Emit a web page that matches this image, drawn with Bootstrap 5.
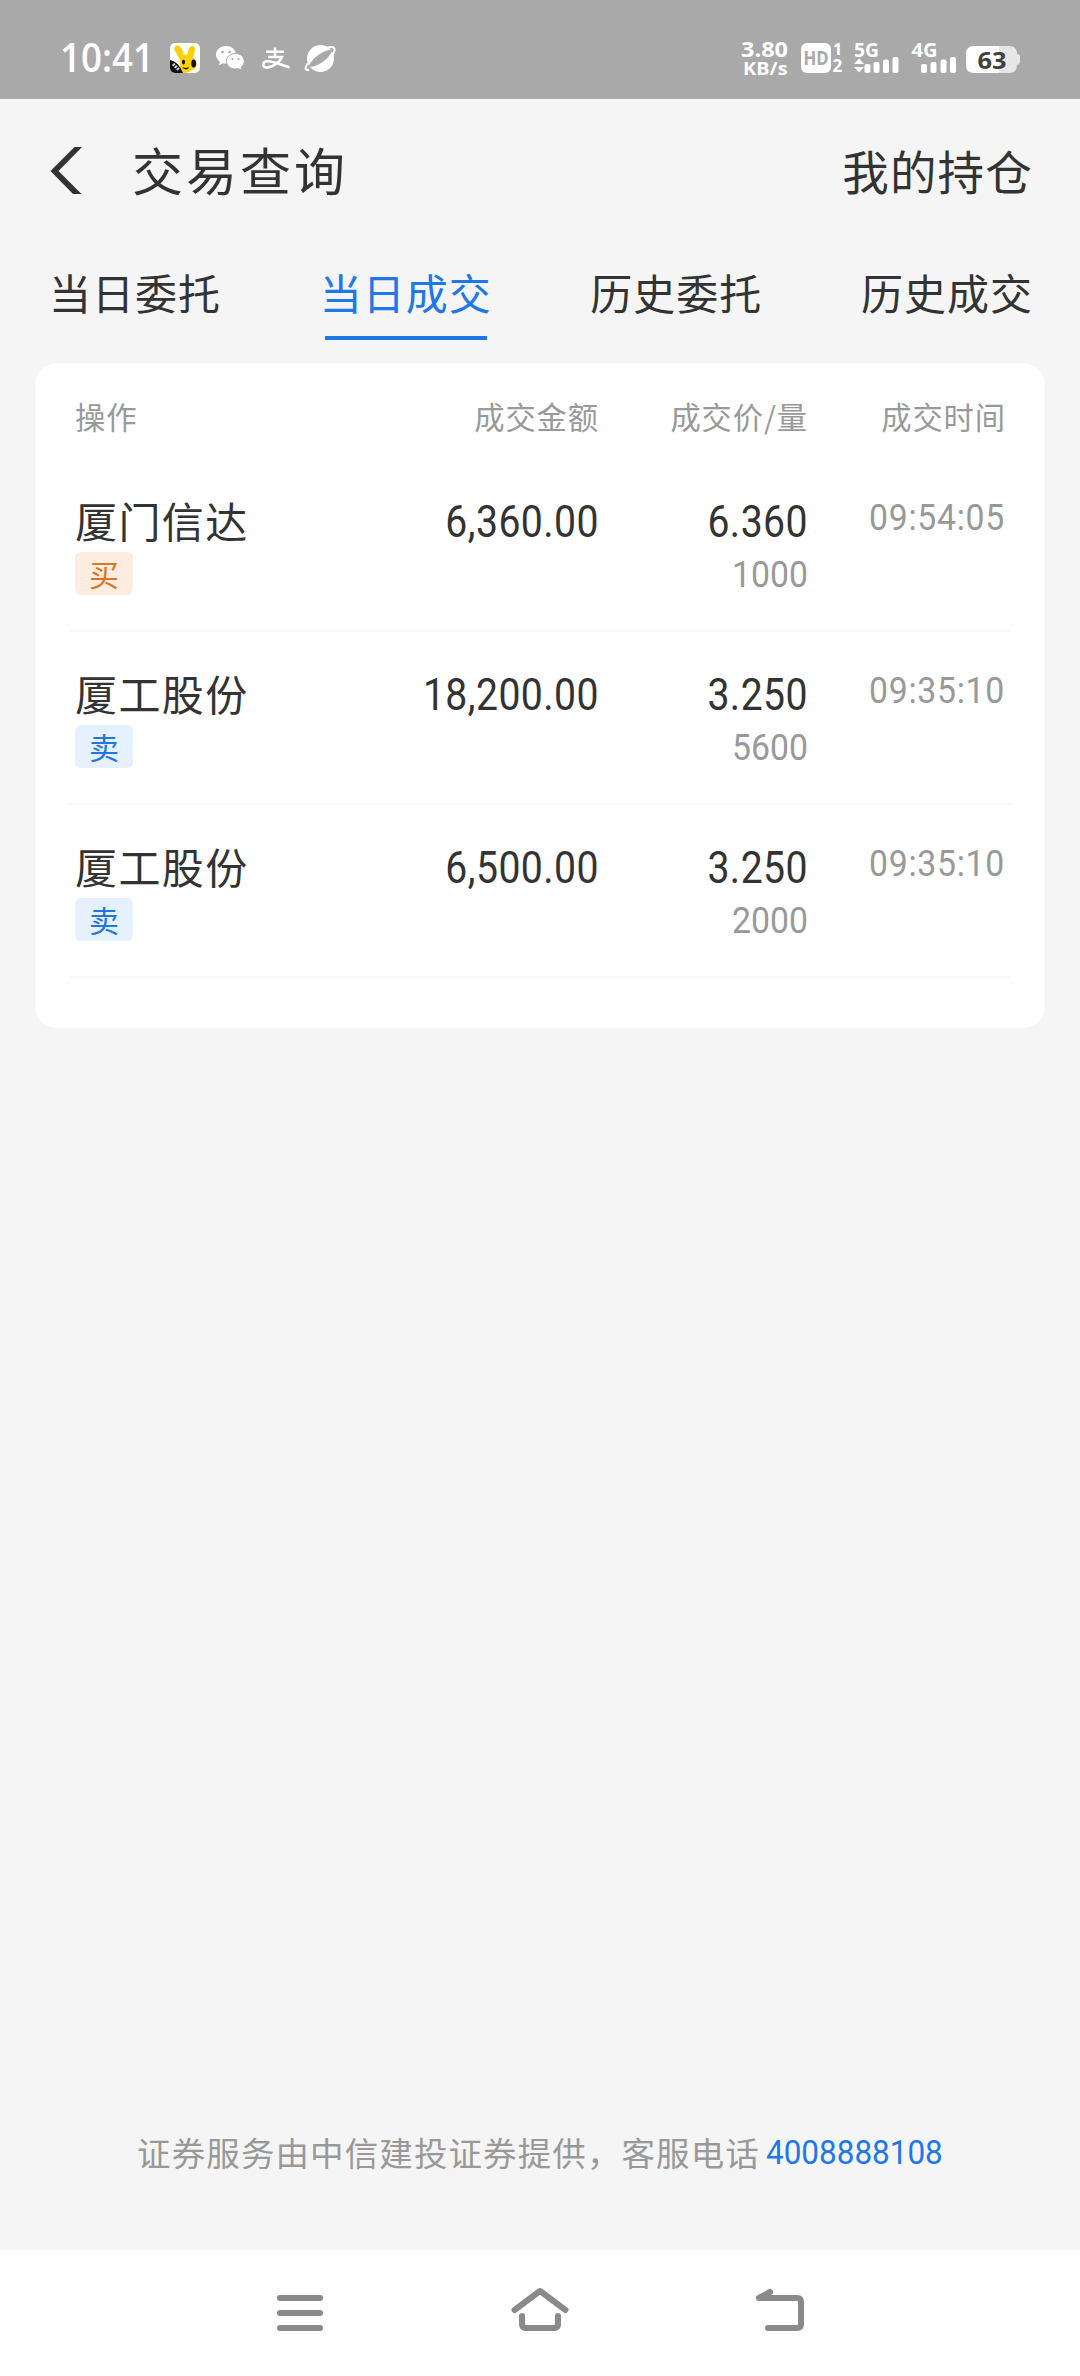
<!DOCTYPE html>
<html lang="zh-CN">
<head>
<meta charset="utf-8">
<meta name="viewport" content="width=device-width, initial-scale=1">
<title>交易查询</title>
<link rel="stylesheet" href="https://cdn.jsdelivr.net/npm/bootstrap@5.3.0/dist/css/bootstrap.min.css">
<script src="https://cdn.jsdelivr.net/npm/bootstrap@5.3.0/dist/js/bootstrap.bundle.min.js"></script>
<style>
  body { width: 1080px; height: 2376px; background: #f5f5f5; color: #333; overflow: hidden;
    font-family: "Noto Sans CJK SC", sans-serif; }
  svg { display: block; flex: none; }
  svg text { font-family: "Open Sans", sans-serif; }
  .status-bar { height: 99px; background: #a9a9a9; padding: 0 58px 0 60px; }
  .title-bar { height: 146px; padding: 0 47px 3px 50px; }
  .page-title { font-size: 51px; letter-spacing: 3px; line-height: 60px; margin: -4px 0 0 48px; }
  .holdings { font-size: 46.5px; letter-spacing: 1.2px; line-height: 60px; margin-top: -1px; }
  .tabs { height: 118px; padding: 0 47px 0 49px; }
  .tabs a { height: 95px; padding-top: 17px; font-size: 42px; letter-spacing: 1px; line-height: 60px; color: #333; }
  .tabs a.active { color: #2077e8; }
  .tabs a.active::after { content: ""; display: block; width: 162px; height: 4px; margin: 14px 0 0 5px; background: #2077e8; }
  .deals { margin: 0 35px; height: 665px; border: 0; border-radius: 22px; padding: 0 34px; }
  .deal-head { height: 96px; padding: 33px 5px 0 6px; font-size: 30.3px; letter-spacing: .9px; line-height: 40px; color: #999; }
  .deal { height: 173px; padding: 33px 6px 0; border-bottom: 2px solid #f8f8f8; }
  .c-name { width: 224px; } .c-sum { width: 300px; } .c-price { width: 209px; } .c-time { width: 197px; }
  .stock { font-size: 42px; letter-spacing: 1.4px; line-height: 56px; }
  .side { width: 58px; height: 43px; margin-top: 4px; border-radius: 6px; font-size: 30px; line-height: 43px; }
  .buy { background: #fdece0; color: #dc7420; }
  .sell { background: #e6f1ff; color: #2277dd; }
  .num { font-family: Roboto, sans-serif; transform: scaleX(.9); transform-origin: right center; }
  .num-lg { font-size: 43.5px; letter-spacing: .5px; line-height: 56px; margin-top: 3px; }
  .num-sm { font-size: 37.5px; line-height: 44px; color: #999; }
  .c-price .num-sm { margin-top: 1px; }
  .c-time { letter-spacing: .8px; margin-top: 3px; }
  .provider { height: 70px; font-size: 33.5px; letter-spacing: 1.1px; line-height: 50px; color: #999; margin-bottom: 53px; }
  .provider a { font-family: Roboto, sans-serif; font-size: 34px; letter-spacing: 0; color: #2077e8; transform: scaleX(.925); transform-origin: left center; margin-left: 6px; width: 177px; }
  .nav-keys { height: 126px; }
</style>
</head>
<body class="d-flex flex-column">

<header class="status-bar d-flex align-items-center">
  <svg width="280" height="99" viewBox="60 0 280 99">
    <text x="60" y="72" font-size="39.5" font-weight="600" fill="#fff" textLength="94" lengthAdjust="spacingAndGlyphs">10:41</text>
    <!-- rabbit app -->
    <clipPath id="app"><rect x="170" y="43" width="30" height="30" rx="5"/></clipPath>
    <g clip-path="url(#app)">
      <rect x="170" y="43" width="30" height="30" fill="#fff"/>
      <path d="M180 60 174.500 50Q173 45.500 178 45.500Q182 46 183.500 55L187 55Q188.500 45.500 193 46Q197 47 193 57L197 64Q196 70 186 73H180Z" fill="#ffd100"/>
      <path d="M170 60Q178 61 183 73H170Z" fill="#111"/>
      <path d="M173 64l6 6" stroke="#ddd" stroke-width="3" stroke-dasharray="2 1"/>
      <ellipse cx="183.500" cy="62" rx="1.500" ry="2.600" fill="#111"/><ellipse cx="193.700" cy="63.500" rx="2.400" ry="4" fill="#111"/>
      <path d="M183 67.500q3 2.500 5.500 0" fill="none" stroke="#111" stroke-width="1.200"/>
    </g>
    <!-- chat bubbles -->
    <g fill="#fff">
      <path d="M226 46c-6 0-10 4-10 8.700 0 3 1.600 5.500 4 7l-1.200 3.500 4.200-2c1 .3 2 .4 3 .4 6 0 10-4 10-8.800S232 46 226 46Z"/>
      <path d="M235.500 53.500c-5.200 0-9 3.400-9 7.700s3.800 7.800 9 7.800c1 0 2-.1 2.900-.4l3.500 2-.9-3.200c2-1.400 3.300-3.600 3.300-6.200 0-4.300-3.800-7.700-8.800-7.700Z" stroke="#a9a9a9" stroke-width="1"/>
    </g>
    <g fill="#a9a9a9"><circle cx="222.500" cy="52" r="1.300"/><circle cx="229.500" cy="52" r="1.300"/><circle cx="232.500" cy="59" r="1.100"/><circle cx="238.500" cy="59" r="1.100"/></g>
    <!-- payment logo -->
    <path d="M266 51.700h18M275 47.500v9M268 57h14C280 62 272 68 266.500 67.500C262 67 262 61.500 267.500 61.300C274 61.200 280 64.500 289.500 67.500" fill="none" stroke="#fff" stroke-width="2.500"/>
    <!-- ringed planet -->
    <circle cx="320.500" cy="58.500" r="13.500" fill="#fff"/>
    <path d="M309 66.500C312 59 322 51 332 50C329 58.500 318 66.500 309 66.500Z" fill="#a9a9a9" stroke="#a9a9a9"/>
    <path d="M308 63C304 69 305.500 71 309 69.500M326 48.200C334 45.500 337 47.500 332.500 55" fill="none" stroke="#fff" stroke-width="2"/>
  </svg>
  <svg class="ms-auto" width="284" height="99" viewBox="738 0 284 99">
    <g fill="#fff" font-weight="700">
      <text x="741" y="57" font-size="21.500"><tspan textLength="47" lengthAdjust="spacingAndGlyphs">3.80</tspan><tspan x="743" y="74.500" font-size="18.500" textLength="44.500" lengthAdjust="spacingAndGlyphs">KB/s</tspan></text>
      <rect x="801" y="43" width="30" height="30" rx="6"/>
      <text x="803.500" y="65" font-size="19" fill="#a9a9a9" textLength="25" lengthAdjust="spacingAndGlyphs">HD</text>
      <text x="833" y="55" font-size="16">1<tspan x="832.500" y="72" font-size="17">2</tspan></text>
      <text x="854" y="57" font-size="19" textLength="25" lengthAdjust="spacingAndGlyphs">5G</text>
      <text x="911.500" y="57" font-size="19" textLength="26" lengthAdjust="spacingAndGlyphs">4G</text>
      <path d="M859 58.500l5 5.500h-10ZM854 67h10l-5 5.500Z"/>
      <rect x="864.500" y="64" width="6" height="9" rx="2"/><rect x="873.500" y="62" width="6" height="11" rx="2"/><rect x="883" y="59.500" width="6" height="13.500" rx="2"/><rect x="892.500" y="57" width="6" height="16" rx="2"/>
      <rect x="921" y="64" width="6" height="9" rx="2"/><rect x="930.500" y="62" width="6" height="11" rx="2"/><rect x="940.500" y="59.500" width="6" height="13.500" rx="2"/><rect x="950" y="57" width="6" height="16" rx="2"/>
      <path d="M974 46h25v27h-25q-8 0-8-8v-11q0-8 8-8Z"/>
      <path d="M999 46h10q8 0 8 8q3 0 3 3v4q0 3-3 4q0 8-8 8h-10Z" fill="#e6e6e6"/>
      <text x="977.500" y="69" font-size="24" fill="#404040" textLength="29" lengthAdjust="spacingAndGlyphs">63</text>
    </g>
  </svg>
</header>

<nav class="title-bar d-flex align-items-center">
  <svg width="34" height="47" viewBox="0 0 34 47"><path d="M32 0H24.500L.5 24 23 47H31.500L8.500 24Z" fill="#333"/></svg>
  <div class="page-title">交易查询</div>
  <div class="holdings ms-auto">我的持仓</div>
</nav>

<nav class="tabs d-flex justify-content-between">
  <a class="text-decoration-none">当日委托</a>
  <a class="text-decoration-none active">当日成交</a>
  <a class="text-decoration-none">历史委托</a>
  <a class="text-decoration-none">历史成交</a>
</nav>

<main class="deals card">
  <div class="deal-head d-flex text-end">
    <div class="c-name text-start">操作</div><div class="c-sum">成交金额</div><div class="c-price">成交价/量</div><div class="text-end flex-fill">成交时间</div>
  </div>
  <div class="deal d-flex text-end">
    <div class="c-name text-start"><div class="stock">厦门信达</div><div class="side buy text-center">买</div></div>
    <div class="c-sum num num-lg">6,360.00</div>
    <div class="c-price"><div class="num num-lg">6.360</div><div class="num num-sm">1000</div></div>
    <div class="c-time num num-sm">09:54:05</div>
  </div>
  <div class="deal d-flex text-end">
    <div class="c-name text-start"><div class="stock">厦工股份</div><div class="side sell text-center">卖</div></div>
    <div class="c-sum num num-lg">18,200.00</div>
    <div class="c-price"><div class="num num-lg">3.250</div><div class="num num-sm">5600</div></div>
    <div class="c-time num num-sm">09:35:10</div>
  </div>
  <div class="deal d-flex text-end">
    <div class="c-name text-start"><div class="stock">厦工股份</div><div class="side sell text-center">卖</div></div>
    <div class="c-sum num num-lg">6,500.00</div>
    <div class="c-price"><div class="num num-lg">3.250</div><div class="num num-sm">2000</div></div>
    <div class="c-time num num-sm">09:35:10</div>
  </div>
</main>

<footer class="mt-auto">
  <div class="provider d-flex justify-content-center"><span>证券服务由中信建投证券提供，客服电话</span><a class="text-decoration-none">4008888108</a></div>
  <div class="nav-keys bg-white">
    <svg width="1080" height="126" viewBox="0 2250 1080 126" fill="none" stroke="#8a8a8a" stroke-width="6" stroke-linecap="round" stroke-linejoin="round">
      <path d="M280 2298h40M280 2313h40M280 2328h40"/>
      <path d="M514.500 2310L540 2291l25.500 19M522 2316v8q0 4 4 4h28q4 0 4-4v-8"/>
      <path d="M770 2292l-11 6h38q4 0 4 4v22q0 4-4 4h-29"/>
    </svg>
  </div>
</footer>
</body>
</html>
